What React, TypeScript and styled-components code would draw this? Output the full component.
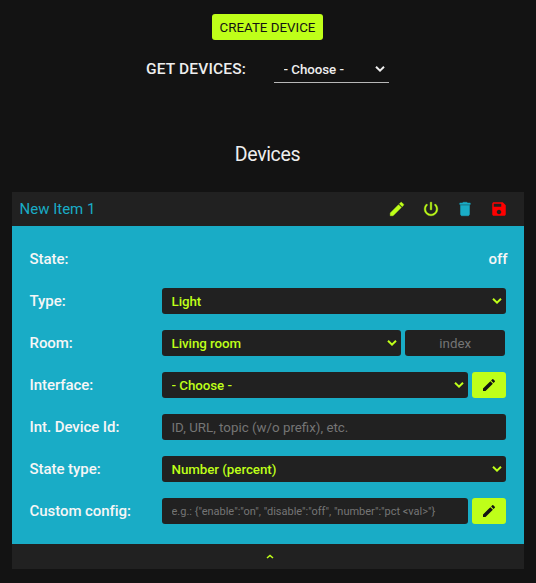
import React from 'react';
import styled, { createGlobalStyle } from 'styled-components';

const lime = '#bfff19';
const cyan = '#19acc6';
const panel = '#212121';
const page = '#131313';

const GlobalStyle = createGlobalStyle`
  * { box-sizing: border-box; }
  body {
    margin: 0;
    background: ${page};
    color: #eee;
    font-family: Roboto, sans-serif;
    font-size: 15px;
  }
  button, input, select { font-family: inherit; margin: 0; }
`;

const Page = styled.main`
  display: flex;
  flex-direction: column;
  align-items: center;
  min-height: 583px;
  padding: 14px 12px;
`;

const CreateButton = styled.button`
  width: 111px;
  height: 26px;
  margin-right: 1px;
  padding: 1px 0 0;
  border: 0;
  border-radius: 3px;
  background: ${lime};
  color: ${page};
  font-size: 13.33px;
  white-space: nowrap;
`;

const Filter = styled.div`
  display: flex;
  align-items: center;
  width: 243px;
  height: 27px;
  margin: 16px 0 0 -1px;
`;

const FilterLabel = styled.label`
  width: 128px;
  padding-bottom: 1px;
  font-size: 15.5px;
  font-weight: 500;
  letter-spacing: 0.16px;
`;

const Heading = styled.h2`
  margin: 59px 1px 0 0;
  height: 25px;
  line-height: 25px;
  font-size: 19.5px;
  font-weight: 400;
  letter-spacing: -0.35px;
`;

const Card = styled.section`
  width: 512px;
  margin-top: 25px;
  background: ${panel};
`;

const CardHeader = styled.header`
  display: flex;
  align-items: center;
  justify-content: space-between;
  height: 34px;
  padding: 0 8.5px 0 7.5px;
`;

const Title = styled.span`
  color: ${cyan};
`;

const Actions = styled.div`
  display: flex;
`;

const IconButton = styled.button<{ $color: string }>`
  display: grid;
  place-items: center;
  width: 34px;
  height: 34px;
  padding: 0;
  border: 0;
  background: none;
  color: ${(p) => p.$color};
`;

const Form = styled.div`
  height: 318px;
  padding: 12px 18px 0 17.5px;
  background: ${cyan};
`;

const Row = styled.div`
  display: flex;
  align-items: center;
  height: 42px;
`;

const Label = styled.label`
  flex: 0 0 132.5px;
  color: #f6f6f6;
  font-weight: 500;
  letter-spacing: -0.06px;
`;

const StateValue = styled.span`
  margin: 0 -1.5px 0 auto;
  color: #f6f6f6;
  font-weight: 500;
`;

const Fields = styled.div`
  display: flex;
  flex: 1;
  gap: 4px;
`;

const SelectBox = styled.div<{ $underlined?: boolean }>`
  display: grid;
  flex: 1;
  align-items: center;
  height: ${(p) => (p.$underlined ? 27 : 26)}px;
  border-bottom: ${(p) => (p.$underlined ? '1px solid #b8b8b8' : '0')};
  border-radius: ${(p) => (p.$underlined ? 0 : 3)}px;
  background: ${(p) => (p.$underlined ? 'transparent' : panel)};
  color: ${(p) => (p.$underlined ? '#eee' : lime)};
  > * { grid-area: 1 / 1; }
  > svg {
    justify-self: end;
    margin-right: 4px;
    pointer-events: none;
  }
`;

const NativeSelect = styled.select`
  appearance: none;
  width: 100%;
  height: 26px;
  padding: 1px 20px 0 9.5px;
  border: 0;
  background: transparent;
  color: inherit;
  font-size: 13.33px;
  font-weight: 500;
  letter-spacing: -0.05px;
`;

const TextInput = styled.input<{ $small?: boolean; $index?: boolean }>`
  flex: ${(p) => (p.$index ? '0 0 100px' : '1')};
  min-width: 0;
  height: 26px;
  padding: ${(p) => (p.$small ? '0' : '1px')} 9px 0 9.5px;
  margin-right: ${(p) => (p.$index ? '1px' : '0')};
  border: 0;
  border-radius: 3px;
  background: ${panel};
  color: ${lime};
  font-size: ${(p) => (p.$small ? '11px' : '13.33px')};
  text-align: ${(p) => (p.$index ? 'center' : 'left')};
  &::placeholder { color: #757575; opacity: 1; }
`;

const EditButton = styled.button`
  display: grid;
  place-items: center;
  width: 34px;
  height: 26px;
  padding: 0 1px 0 0;
  border: 0;
  border-radius: 3px;
  background: ${lime};
  color: ${page};
`;

const Collapse = styled.button`
  display: grid;
  place-items: center;
  width: 100%;
  height: 25px;
  padding: 0 0 0 4px;
  border: 0;
  background: ${panel};
  color: ${lime};
`;

const icons = {
  edit: 'M3 17.25V21h3.75L17.81 9.94l-3.75-3.75L3 17.25zM20.71 7.04c.39-.39.39-1.02 0-1.41l-2.34-2.34c-.39-.39-1.02-.39-1.41 0l-1.83 1.83 3.75 3.75 1.83-1.83z',
  power: 'M13 3h-2v10h2V3zm4.83 2.17l-1.42 1.42C17.99 7.86 19 9.81 19 12c0 3.87-3.13 7-7 7s-7-3.13-7-7c0-2.19 1.01-4.14 2.58-5.42L6.17 5.17C4.23 6.82 3 9.26 3 12c0 4.97 4.03 9 9 9s9-4.03 9-9c0-2.74-1.23-5.18-3.17-6.83z',
  trash: 'M6 19c0 1.1.9 2 2 2h8c1.1 0 2-.9 2-2V7H6v12zM19 4h-3.5l-1-1h-5l-1 1H5v2h14V4z',
  save: 'M17 3H5c-1.11 0-2 .9-2 2v14c0 1.1.89 2 2 2h14c1.1 0 2-.9 2-2V7l-4-4zm-5 16c-1.66 0-3-1.34-3-3s1.34-3 3-3 3 1.34 3 3-1.34 3-3 3zm3-10H5V5h10v4z',
};

// The header glyphs carry a slightly heavier outline than the form buttons.
const HeavyIcon = styled.svg<{ $heavy: boolean }>`
  fill: currentColor;
  stroke: currentColor;
  stroke-width: ${(p) => (p.$heavy ? 0.6 : 0)};
`;

function Icon({ name, size = 18, heavy = false }: { name: keyof typeof icons; size?: number; heavy?: boolean }) {
  return (
    <HeavyIcon $heavy={heavy} width={size} height={size} viewBox="0 0 24 24" aria-hidden="true">
      <path d={icons[name]} />
    </HeavyIcon>
  );
}

function Select({ value, underlined }: { value: string; underlined?: boolean }) {
  return (
    <SelectBox $underlined={underlined}>
      <NativeSelect aria-label={value}>
        <option>{value}</option>
      </NativeSelect>
      <svg width="10" height="6" viewBox="0 0 10 6" fill="none" stroke="currentColor" strokeWidth="2">
        <path d="M1 .8 5 4.6 9 .8" />
      </svg>
    </SelectBox>
  );
}

function Field({ label, children }: { label: string; children: React.ReactNode }) {
  return (
    <Row>
      <Label>{label}</Label>
      <Fields>{children}</Fields>
    </Row>
  );
}

export default function App() {
  return (
    <>
      <GlobalStyle />
      <Page>
        <CreateButton>CREATE DEVICE</CreateButton>
        <Filter>
          <FilterLabel>GET DEVICES:</FilterLabel>
          <Select value="- Choose -" underlined />
        </Filter>
        <Heading>Devices</Heading>
        <Card>
          <CardHeader>
            <Title>New Item 1</Title>
            <Actions>
              <IconButton $color={lime} aria-label="Edit"><Icon name="edit" heavy /></IconButton>
              <IconButton $color={lime} aria-label="Power"><Icon name="power" heavy /></IconButton>
              <IconButton $color={cyan} aria-label="Delete"><Icon name="trash" heavy /></IconButton>
              <IconButton $color="#f00" aria-label="Save"><Icon name="save" /></IconButton>
            </Actions>
          </CardHeader>
          <Form>
            <Row>
              <Label>State:</Label>
              <StateValue>off</StateValue>
            </Row>
            <Field label="Type:"><Select value="Light" /></Field>
            <Field label="Room:">
              <Select value="Living room" />
              <TextInput $index placeholder="index" />
            </Field>
            <Field label="Interface:">
              <Select value="- Choose -" />
              <EditButton aria-label="Edit interface"><Icon name="edit" size={16} /></EditButton>
            </Field>
            <Field label="Int. Device Id:">
              <TextInput placeholder="ID, URL, topic (w/o prefix), etc." />
            </Field>
            <Field label="State type:"><Select value="Number (percent)" /></Field>
            <Field label="Custom config:">
              <TextInput $small placeholder={'e.g.: {"enable":"on", "disable":"off", "number":"pct <val>"}'} />
              <EditButton aria-label="Edit config"><Icon name="edit" size={16} /></EditButton>
            </Field>
          </Form>
          <Collapse aria-label="Collapse">
            <svg width="8" height="5" viewBox="0 0 8 5" fill="none" stroke="currentColor" strokeWidth="1.6">
              <path d="M1 4 4 1.5 7 4" />
            </svg>
          </Collapse>
        </Card>
      </Page>
    </>
  );
}
